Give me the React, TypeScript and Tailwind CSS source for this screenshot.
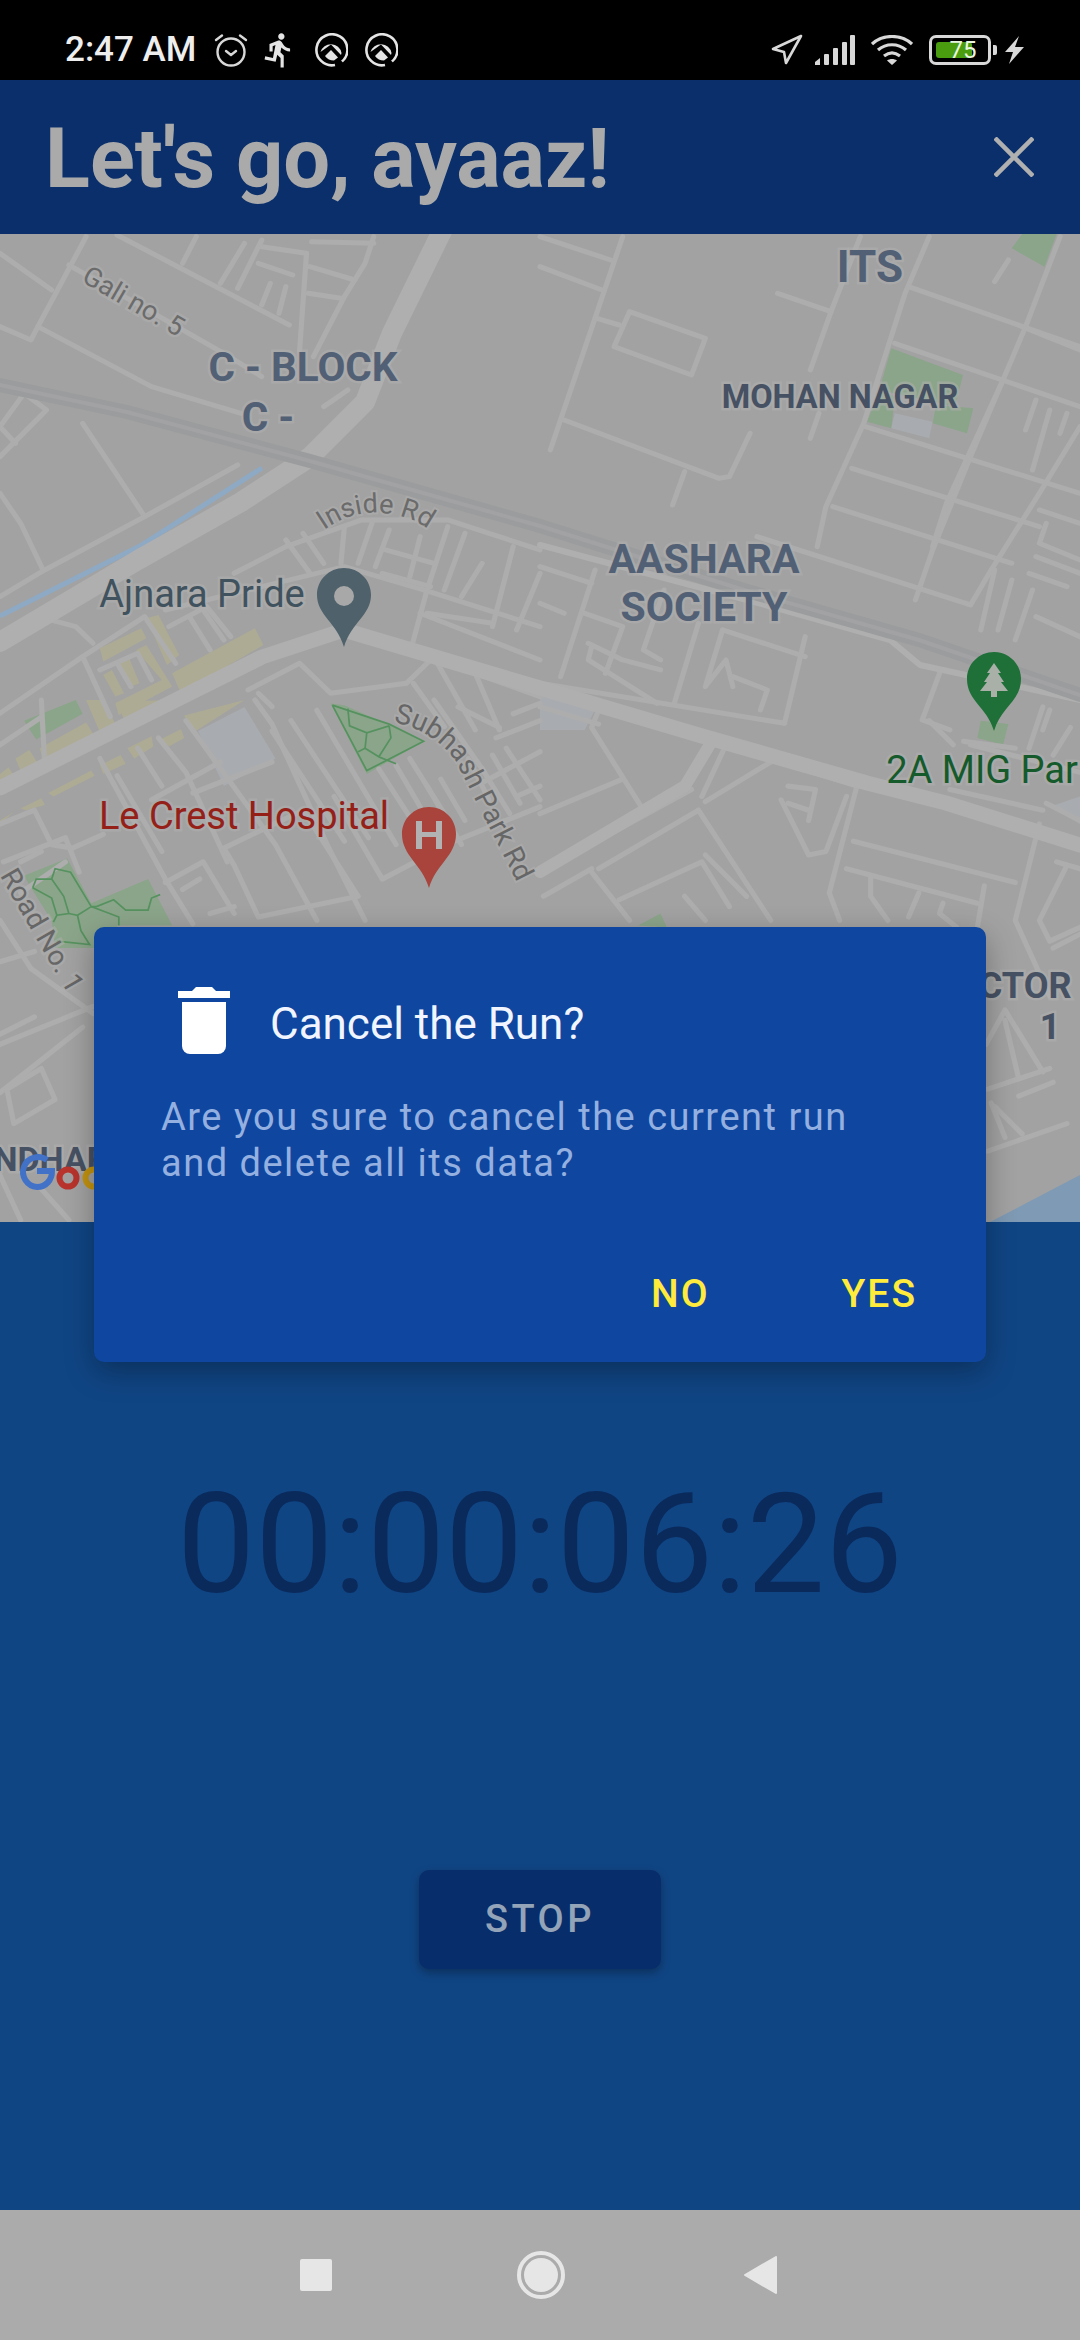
import { MdDirectionsRun } from "react-icons/md";

const font = "font-['Roboto',sans-serif]";

// street lines traced per quadrant of the map
const topLeft = [
  "M0 70L150 180", "M250 20L110 290L90 330L0 290", "M110 290L440 470L700 550", "M200 105L650 370L760 440",
  "M340 15L840 285", "M570 20L530 100", "M710 40L640 160", "M760 30L690 175", "M760 50L890 70", "M750 100L850 135",
  "M785 160L760 225", "M830 170L810 250", "M890 70L870 360", "M905 35L1085 40", "M900 110L1030 150", "M895 190L990 205",
  "M1085 20L1060 100L1000 200L910 380", "M1010 480L940 530", "M240 580L420 860", "M0 590L70 490L135 540L0 680", "M0 590L45 640",
  "M690 705L420 860L130 1020L0 1100", "M0 790L60 880L125 1020", "M680 1030L830 950L1050 870L1300 870L1568 960",
  "M830 930L900 1030", "M880 910L940 1000", "M1080 880L1040 1000", "M1000 890L990 1000", "M480 1140L1000 1010L1230 1080L1568 1190",
  "M1130 900L1090 1010", "M1120 960L1260 1000", "M1220 920L1190 1040", "M1110 1030L1250 1070", "M1300 890L1240 1080L1190 1270",
  "M1350 910L1290 1080", "M1490 950L1430 1190", "M1400 1000L1340 1100", "M1568 1030L1500 1200", "M1240 1150L1430 1180",
  "M1220 1150L1568 1290", "M130 1165L220 1190L270 1240", "M0 1450L240 1280L320 1460", "M240 1280L420 1160L510 1300",
  "M490 1190L600 1130L670 1220", "M550 1160L610 1260", "M590 1140L650 1230", "M290 1320L400 1270L440 1350", "M340 1300L380 1370",
  "M720 1380L870 1300L960 1390L1180 1360", "M750 1390L790 1430", "M1180 1360L1250 1290L1380 1330L1568 1400", "M1200 1360L1290 1490",
  "M1270 1300L1380 1500", "M1380 1330L1450 1500",
];
const topRight = [
  "M0 20L205 90", "M0 110L180 180", "M240 20L30 660", "M165 265L230 285", "M260 245L480 325L440 435L215 350Z",
  "M70 570L520 745L550 740L610 610", "M420 725L385 825", "M690 190L845 245", "M930 20L845 245L785 420", "M810 550L785 625",
  "M1130 20L1060 190L940 580L830 830L805 950", "M1070 170L1568 350", "M1030 340L1568 530", "M945 590L1568 790", "M905 715L1450 890",
  "M850 830L1370 1000", "M1360 90L1320 155", "M1510 20L1410 290L1250 680L1140 960L1090 1110", "M1400 290L1568 360", "M1340 460L1180 820L1140 950",
  "M630 920L1250 1125L1310 1020L1450 790L1568 590", "M1440 510L1410 600", "M1480 540L1430 720", "M1530 550L1510 610",
  "M160 1020L60 1340", "M0 1010L150 1060", "M0 1120L70 1150", "M130 1150L240 1190L190 1330", "M140 1240L240 1290L350 1320",
  "M150 1250L140 1290L340 1420", "M360 1080L300 1260L350 1290", "M460 1180L390 1420", "M530 1200L480 1370L540 1290L560 1370", "M530 1200L770 1280",
  "M560 1340L660 1380L640 1440", "M770 1220L710 1480", "M0 1360L710 1480", "M1320 1020L1280 1200", "M1370 1050L1330 1200", "M1430 1080L1380 1230",
  "M1450 840L1568 880", "M1470 880L1450 940L1568 990", "M1440 980L1568 1030", "M1420 1030L1530 1070", "M1440 1160L1568 1220", "M1160 1330L1110 1470L1190 1500",
  "M1480 1440L1460 1500",
];
const bottomLeft = [
  "M740 0L790 70L950 420L1060 640", "M0 130L120 50", "M120 0L130 190", "M290 170L480 520L560 650", "M340 220L470 440", "M400 140L470 250",
  "M460 110L540 210L660 470", "M540 60L800 420L920 640", "M790 90L1000 410", "M845 60L1070 400", "M920 30L1150 420", "M1150 190L1220 310", "M1100 200L1190 340",
  "M970 280L1110 520L1320 410L1568 310", "M1190 170L1290 330", "M1240 250L1340 420", "M1280 230L1350 350", "M650 430L880 320L1040 570L750 630L680 480Z",
  "M560 270L790 180", "M440 290L640 180", "M480 530L590 470L680 620", "M530 550L580 520", "M610 620L680 600", "M0 360L100 320L150 420L210 430L300 390",
  "M10 470L190 400L230 500", "M60 470L120 440", "M190 470L60 560", "M1260 0L1400 200L1480 330", "M1330 20L1450 80", "M1360 170L1420 290", "M1430 160L1510 300",
  "M1470 140L1568 290", "M1490 40L1568 10", "M1440 110L1568 60", "M1400 240L1568 150", "M1500 280L1568 250", "M0 640L90 780L270 910", "M0 760L100 730", "M0 1000L270 890",
  "M0 1140L240 950", "M20 1130L120 1070L160 1160L40 1230Z", "M0 1380L60 1510", "M120 1420L200 1510", "M0 970L100 920",
];
const bottomRight = [
  "M170 30L150 80L300 320", "M0 20L170 70", "M0 330L240 230", "M0 500L440 260", "M460 320L670 640", "M170 490L460 320", "M150 500L260 640", "M230 580L470 470L550 600",
  "M10 570L150 490", "M420 570L480 640", "M480 450L600 570", "M480 295L670 180", "M540 130L470 280", "M730 190L920 250L840 560L870 640", "M700 290L780 450L830 440L890 280",
  "M720 250L800 260L780 350", "M720 300L780 320", "M910 410L1380 530", "M890 490L1270 590", "M960 510L960 570L1010 640", "M1100 560L1070 630", "M1170 590L1160 620L1210 660",
  "M1290 540L1270 660", "M1450 360L1380 640L1480 860", "M1530 480L1450 640L1480 700L1568 660", "M1490 720L1568 680", "M1500 470L1568 490", "M1295 1000L1350 900L1460 1080",
  "M1350 930L1390 1100", "M1300 1130L1480 1070", "M1300 1310L1530 1230", "M1390 1150L1490 1110", "M1320 1180L1400 1260", "M1310 1170L1350 1270", "M1130 60L1200 130",
  "M1230 120L1380 140", "M1460 20L1420 140", "M1540 80L1490 160", "M1250 130L1568 210", "M1190 260L1460 320", "M1470 300L1568 350",
];

function Label({ x, y, size, fill, weight, rotate, children }: { x: number; y: number; size: number; fill: string; weight?: number; rotate?: number; children: string }) {
  return (
    <text
      x={x}
      y={y}
      fontSize={size}
      fontWeight={weight ?? 400}
      fill={fill}
      textAnchor="middle"
      stroke="#b0b0b0"
      strokeWidth={5}
      strokeOpacity={0.55}
      paintOrder="stroke"
      transform={rotate ? `rotate(${rotate} ${x} ${y})` : undefined}
    >
      {children}
    </text>
  );
}

function Streets({ list, transform }: { list: string[]; transform: string }) {
  return (
    <g transform={transform} fill="none" stroke="#adadad" strokeWidth={15} strokeLinecap="round" strokeLinejoin="round">
      {list.map((d) => (
        <path key={d} d={d} />
      ))}
    </g>
  );
}

function MapDrawing() {
  return (
    <svg viewBox="0 234 1080 988" className={`w-full h-full block ${font}`}>
      <rect x="0" y="234" width="1080" height="988" fill="#a2a2a2" />
      {/* land use, same crop coordinates as the street lists */}
      <g transform="translate(540 230) scale(0.3444 0.3333)">
        <g fill="#8ba58a">
          <path d="M1020 355L1228 435L1205 530L985 480Z" />
          <path d="M985 480L1030 500L1020 595L950 575Z" />
          <path d="M1150 525L1258 535L1240 610L1140 580Z" />
          <path d="M1370 55L1400 12L1500 12L1465 110Z" />
        </g>
        <path d="M1030 550L1140 575L1130 625L1020 595Z" fill="#a8abaf" />
        <path d="M0 1380L165 1430L130 1500L0 1500Z" fill="#a8abaf" />
      </g>
      <g transform="translate(0 230) scale(0.3444 0.3333)" fill="#aeab95">
        <path d="M290 1255L410 1195L425 1225L300 1295Z" />
        <path d="M425 1165L460 1155L520 1275L485 1305Z" />
        <path d="M395 1260L425 1245L500 1370L345 1455L335 1420L470 1350Z" />
        <path d="M345 1300L375 1285L405 1360L380 1370Z" />
        <path d="M300 1335L325 1320L360 1390L335 1400Z" />
        <path d="M500 1330L740 1195L765 1245L525 1390Z" />
      </g>
      <g transform="translate(0 700) scale(0.3444)">
        <g fill="#aeab95">
          <path d="M250 0L300 0L335 70L295 105Z" />
          <path d="M340 5L495 0L365 70Z" />
          <path d="M535 45L710 0L560 95Z" />
          <path d="M115 140L250 65L275 105L130 190Z" />
          <path d="M45 170L85 145L120 200L70 230Z" />
          <path d="M0 215L25 195L50 235L0 275Z" />
          <path d="M290 190L350 160L365 185L300 215Z" />
          <path d="M140 270L265 205L275 220L155 280Z" />
          <path d="M60 315L120 285L130 305L75 320Z" />
          <path d="M0 350L40 325L0 360Z" />
          <path d="M370 140L440 105L445 135L390 170Z" />
          <path d="M465 115L525 85L535 110L490 135Z" />
        </g>
        <path d="M575 90L710 20L800 170L650 250Z" fill="#a8abaf" />
        <g fill="#8ba58a">
          <path d="M70 60L220 0L240 40L105 115Z" />
          <path d="M960 10L1000 15L1135 75L1230 120L1065 215Z" />
          <path d="M70 510L195 460L265 590L430 520L500 655L340 655L345 720L160 720L150 640L90 545Z" />
        </g>
      </g>
      <g transform="translate(540 700) scale(0.3444)">
        <path d="M1280 60L1360 70L1345 130L1270 110Z" fill="#8ba58a" />
        <path d="M285 655L350 620L368 660Z" fill="#8ba58a" />
        <path d="M1480 310L1568 280L1568 360Z" fill="#a8abaf" />
      </g>
      <path d="M262 468L140 546L0 616" fill="none" stroke="#8ea9c4" strokeWidth="5" />
      <path d="M1080 1175L990 1222L1080 1222Z" fill="#7f9ab4" />
      <Streets list={topLeft} transform="translate(0 230) scale(0.3444 0.3333)" />
      <Streets list={topRight} transform="translate(540 230) scale(0.3444 0.3333)" />
      <Streets list={bottomLeft} transform="translate(0 700) scale(0.3444)" />
      <Streets list={bottomRight} transform="translate(540 700) scale(0.3444)" />
      {/* footpaths in the parks */}
      <g transform="translate(0 700) scale(0.3444)" fill="none" stroke="#56925f" strokeWidth="5">
        <path d="M965 15L1065 205L1230 120L1130 70L965 15" />
        <path d="M1010 25L1015 75L1065 95L1130 75M1065 95L1060 140L1100 165L1135 110L1130 75M1040 150L1060 140M1100 165L1150 185" />
        <path d="M95 545L105 520L150 520L160 490L205 500L265 600L345 630L345 655" />
        <path d="M150 520L185 570L200 620L165 625L155 645M95 545L150 575L165 625M200 620L225 625L265 600" />
        <path d="M225 625L235 670L260 710L165 700M265 600L280 600L330 580L365 610L430 610L440 575L465 565" />
      </g>
      {/* wider roads */}
      <g fill="none" stroke="#afafaf" strokeLinecap="round" strokeLinejoin="round">
        <path d="M445 225L392 333L365 402L310 457L241 502L138 560L0 642" strokeWidth="20" />
        <path d="M344 630L540 688L702 736L867 783L946 803L1080 845" strokeWidth="15" />
        <path d="M344 630L262 657L172 702L0 788" strokeWidth="15" />
        <path d="M540 545L747 600L890 640L920 665L1080 700" strokeWidth="6" />
        <path d="M712 741L685 786L540 872" strokeWidth="12" />
      </g>
      <g fill="none" strokeLinecap="round">
        <path d="M0 385L127 412L310 461L540 526L747 591L919 640L1080 695" stroke="#9b9c9d" strokeWidth="14" />
        <path d="M0 385L127 412L310 461L540 526L747 591L919 640L1080 695" stroke="#a2a2a4" strokeWidth="4" />
      </g>
      {/* labels */}
      <Label x={129} y={309} size={27} fill="#6b6b6b" rotate={30}>Gali no. 5</Label>
      <Label x={303} y={381} size={40.5} weight={700} fill="#526075">C - BLOCK</Label>
      <Label x={268} y={431} size={40.5} weight={700} fill="#526075">C -</Label>
      <Label x={870} y={282} size={44} weight={700} fill="#526075">ITS</Label>
      <Label x={840} y={408} size={32.5} weight={700} fill="#465163">MOHAN NAGAR</Label>
      <Label x={704} y={573} size={41} weight={700} fill="#526075">AASHARA</Label>
      <Label x={704} y={621} size={41} weight={700} fill="#526075">SOCIETY</Label>
      <Label x={202} y={607} size={38} fill="#3f525e">Ajnara Pride</Label>
      <Label x={244} y={829} size={38} fill="#952018">Le Crest Hospital</Label>
      <Label x={982} y={783} size={38} fill="#155a2b">2A MIG Par</Label>
      <Label x={34} y={935} size={28} fill="#666666" rotate={60}>Road No. 1</Label>
      <Label x={1004} y={998} size={36} weight={700} fill="#465163">SECTOR</Label>
      <Label x={1050} y={1039} size={36} weight={700} fill="#465163">1</Label>
      <Label x={51} y={1171} size={34} weight={700} fill="#465163">NDHAR</Label>
      <path id="inside-rd" d="M324 530C350 512 372 510 395 515S420 525 432 531" fill="none" />
      <text fontSize={27} fill="#6b6b6b" stroke="#b0b0b0" strokeWidth={4} strokeOpacity={0.55} paintOrder="stroke">
        <textPath href="#inside-rd">Inside Rd</textPath>
      </text>
      <path id="subhash-rd" d="M393 722C420 728 440 740 455 760L520 888" fill="none" />
      <text fontSize={28} fill="#666666" stroke="#b0b0b0" strokeWidth={4} strokeOpacity={0.55} paintOrder="stroke">
        <textPath href="#subhash-rd">Subhash Park Rd</textPath>
      </text>
      {/* google logo, cut by the dialog */}
      <g fill="none" strokeWidth="6">
        <path d="M37 1171H52C52 1180 46 1187 37 1187A15 15 0 1 1 47 1160" stroke="#4272c8" />
        <circle cx="68" cy="1178" r="8.5" stroke="#b8342c" />
        <circle cx="94" cy="1178" r="8.5" stroke="#c49410" />
      </g>
      {/* pins */}
      <path d="M344 568c15 0 27 12 27 27c0 20-20 28-27 52c-7-24-27-32-27-52c0-15 12-27 27-27Z" fill="#4f616b" />
      <circle cx="344" cy="596" r="10" fill="#a8a8a8" />
      <path d="M429 807c15 0 27 12 27 27c0 22-20 30-27 54c-7-24-27-32-27-54c0-15 12-27 27-27Z" fill="#a8443c" />
      <path d="M416 821h6v11h14v-11h6v28h-6v-12h-14v12h-6Z" fill="#b2b2b2" />
      <path d="M994 652c15 0 27 12 27 27c0 22-20 28-27 52c-7-24-27-30-27-52c0-15 12-27 27-27Z" fill="#1f6f38" />
      <path d="M994 663l7 10h-3l6 9h-3l7 9h-11v6h-6v-6h-11l7-9h-3l6-9h-3Z" fill="#a8b0a8" />
    </svg>
  );
}

function QIcon() {
  return (
    <svg width="34" height="34" viewBox="0 0 34 34" className="ml-[16px]" fill="#e4e4e4">
      <path d="M27.5 29A15.5 15.5 0 1 0 21 32" fill="none" stroke="#e4e4e4" strokeWidth="2.6" />
      <path d="M6.5 19A10.8 10.8 0 0 1 27.5 20L27 22L17 11.5Z" />
      <path d="M11 23L17 17L24 24.5L20 27.5A11 11 0 0 1 11 23Z" />
      <path d="M25 27L29 31" fill="none" stroke="#000000" strokeWidth="2" />
    </svg>
  );
}

function StatusIcons() {
  return (
    <div className="flex items-center">
      <svg width="34" height="34" viewBox="0 0 34 34" fill="none" stroke="#d8d8d8" strokeWidth="2.4" strokeLinecap="round" strokeLinejoin="round">
        <circle cx="17" cy="19" r="13.5" />
        <path d="M2 7L8 2.5M32 7L26 2.5" />
        <path d="M12 18l5 4l5-4" />
      </svg>
      <MdDirectionsRun className="ml-[12px] text-[#e4e4e4] w-[38px] h-[38px]" />
      <QIcon />
      <QIcon />
    </div>
  );
}

function StatusRight() {
  return (
    <div className="flex items-center">
      <svg width="32" height="31" viewBox="0 0 32 31" fill="none" stroke="#d8d8d8" strokeWidth="2.6" strokeLinejoin="round">
        <path d="M30 2L2 15L13 18L15 29Z" />
      </svg>
      <svg width="40" height="30" viewBox="0 0 40 30" className="ml-[12px]" fill="#d8d8d8">
        <path d="M0 30v-3l5-4v7Z" />
        <rect x="9" y="19" width="5" height="11" rx="1" />
        <rect x="18" y="13" width="5" height="17" rx="1" />
        <rect x="27" y="7" width="5" height="23" rx="1" />
        <rect x="35" y="0" width="5" height="30" rx="1" />
      </svg>
      <svg width="42" height="30" viewBox="0 0 42 30" className="ml-[16px]" fill="none" stroke="#d8d8d8" strokeWidth="3.2">
        <path d="M1 9C12 -1 30 -1 41 9" />
        <path d="M7 15C15 8 27 8 35 15" />
        <path d="M13 21C18 17 24 17 29 21" />
        <path d="M21 30L16 25.5C19 23.5 23 23.5 26 25.5Z" fill="#d8d8d8" stroke="none" />
      </svg>
      <div className="relative ml-[16px] w-[62px] h-[30px] rounded-[7px] border-[3px] border-[#d8d8d8]">
        <div className="absolute left-[4px] top-[4px] bottom-[4px] w-[36px] rounded-[3px] bg-[#4a9d0f]" />
        <div className={`absolute inset-0 flex items-center justify-center pl-[6px] text-[24px] leading-none text-[#eaf5e0] ${font}`}>75</div>
      </div>
      <div className="ml-[2px] w-[4px] h-[10px] rounded-r-[2px] bg-[#d8d8d8]" />
      <svg width="19" height="28" viewBox="0 0 19 28" className="ml-[8px]" fill="#d8d8d8">
        <path d="M14 0L0 16H8L4 28L19 11H10Z" />
      </svg>
    </div>
  );
}

export default function App() {
  return (
    <div className={`relative flex flex-col w-[1080px] h-[2340px] overflow-hidden bg-[#104584] ${font}`}>
      <div className="h-[80px] bg-black flex items-center justify-between pt-[19px] pl-[65px] pr-[56px]">
        <div className="flex items-center gap-[18px]">
          <span className="mt-[2px] text-[35px] font-medium text-[#eeeeee]">2:47 AM</span>
          <StatusIcons />
        </div>
        <StatusRight />
      </div>
      <div className="h-[154px] bg-[#0a2f6b] flex items-center justify-between pl-[45px] pr-[46px]">
        <h1 className="mt-[5px] text-[83px] font-bold text-[#aaaaaa]">Let's go, ayaaz!</h1>
        <svg width="40" height="40" viewBox="0 0 40 40" stroke="#b0b0b0" strokeWidth="4.5">
          <path d="M1 1L39 39M39 1L1 39" />
        </svg>
      </div>
      <div className="h-[988px]">
        <MapDrawing />
      </div>
      <div className="flex-1 flex flex-col items-center pt-[255px]">
        <div className="text-[139px] leading-[136px] text-[#0a2a5c]">00:00:06:26</div>
        <button className="mt-[257px] w-[242px] h-[99px] rounded-[10px] bg-[#082d6b] text-[#93a3b8] text-[38px] font-medium tracking-[3.5px] shadow-[0_4px_10px_rgba(0,0,0,0.3)]">
          STOP
        </button>
      </div>
      <div className="h-[130px] bg-[#ababab] flex items-center pl-[300px]">
        <div className="w-[32px] h-[32px] rounded-[2px] bg-[#e6e6e6]" />
        <div className="ml-[185px] w-[48px] h-[48px] rounded-full border-[4px] border-[#e6e6e6] flex items-center justify-center">
          <div className="w-[34px] h-[34px] rounded-full bg-[#e6e6e6]" />
        </div>
        <svg width="34" height="38" viewBox="0 0 34 38" className="ml-[179px]" fill="#e6e6e6" stroke="#e6e6e6" strokeWidth="2" strokeLinejoin="round">
          <path d="M32 1V37L1 19Z" />
        </svg>
      </div>
      {/* confirm dialog sits over the map */}
      <div className="absolute left-[94px] top-[927px] w-[892px] h-[435px] rounded-[10px] bg-[#0f469f] shadow-[0_10px_30px_rgba(0,0,0,0.3)]">
        <div className="flex items-center pl-[84px] pt-[60px]">
          <svg width="52" height="67" viewBox="0 0 52 67" fill="#ffffff">
            <path d="M0 4H14L18 0H34L38 4H52V11H0Z" />
            <path d="M4 15H48V59a8 8 0 0 1-8 8H12a8 8 0 0 1-8-8Z" />
          </svg>
          <div className="ml-[40px] mt-[6px] text-[44px] leading-none text-[#f0f5ff]">Cancel the Run?</div>
        </div>
        <p className="pl-[67px] mt-[40px] text-[38px] leading-[46px] tracking-[1.5px] text-[#94b0e0]">
          Are you sure to cancel the current run
          <br />
          and delete all its data?
        </p>
        <div className="flex justify-end items-center gap-[132px] pr-[69px] mt-[79px] text-[39px] font-medium tracking-[2px] text-[#ffeb3b]">
          <span>NO</span>
          <span>YES</span>
        </div>
      </div>
    </div>
  );
}
